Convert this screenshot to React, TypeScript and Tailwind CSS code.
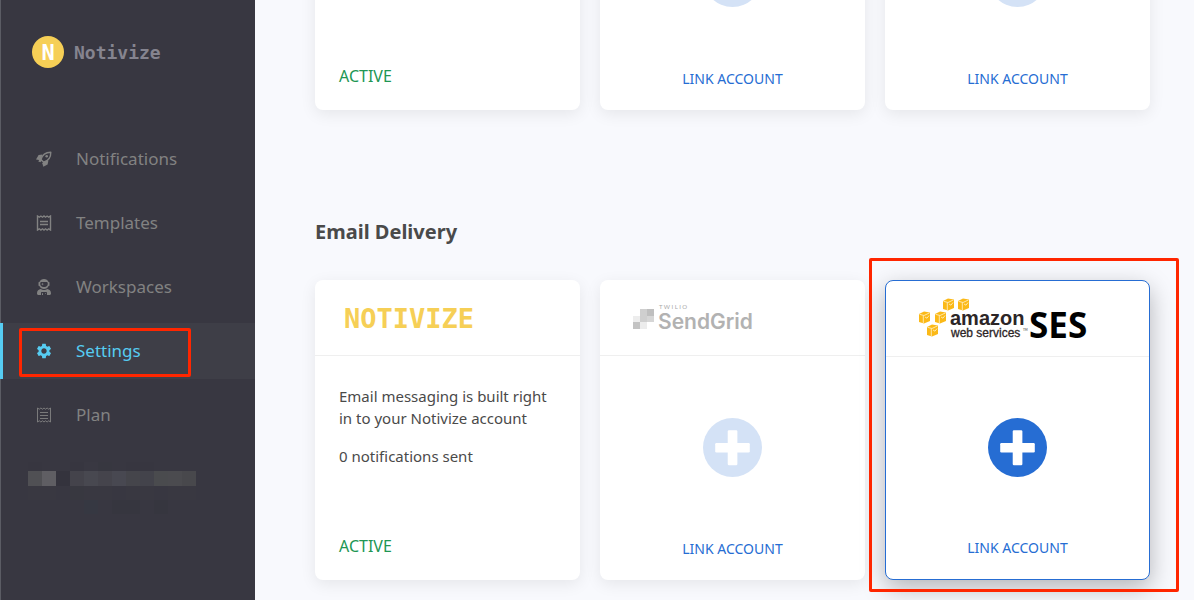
import type { ReactNode } from "react";
import { MdSettings } from "react-icons/md";
import { FaUserAstronaut } from "react-icons/fa";
import clsx from "clsx";

type NavItem = {
  label: string;
  icon: ReactNode;
  active?: boolean;
};

const navItems: NavItem[] = [
  { label: "Notifications", icon: <RocketIcon /> },
  { label: "Templates", icon: <ReceiptIcon /> },
  { label: "Workspaces", icon: <FaUserAstronaut className="size-4" /> },
  { label: "Settings", icon: <MdSettings className="size-[18px]" />, active: true },
  { label: "Plan", icon: <ReceiptIcon thin /> },
];

// obscured account name at the bottom of the sidebar
const accountRows = [
  { height: "h-[9px]", cells: ["#373640", "#383741", "#383741", "#373640", "#393842", "#373740", "#383741", "#373640", "#373640", "#383741", "#383741", "#383741"] },
  { height: "h-[15px]", cells: ["#505054", "#5f5e63", "#34333d", "#44434b", "#484850", "#45444c", "#484851", "#45454b", "#43434b", "#4a4b4e", "#4b4b4f", "#48484c"] },
  { height: "h-[14px]", cells: ["#393841", "#393841", "#383741", "#383840", "#393841", "#393841", "#383741", "#393841", "#393841", "#383741", "#393841", "#393841"] },
  { height: "h-[14px]", cells: ["#383741", "#383741", "#383741", "#383741", "#363842", "#383741", "#36363f", "#36363f", "#383741", "#36363f", "#383741", "#383741"] },
];

function RocketIcon() {
  return (
    <svg viewBox="0 0 16 16" className="size-4" aria-hidden="true">
      <path
        d="M5 8.600C6 4.600 9.200 1.200 14.800 1.200C14.900 6.400 11.800 9.900 7.600 11.200Z"
        fill="none"
        stroke="currentColor"
        strokeWidth="1.4"
        strokeLinejoin="round"
      />
      <circle cx="10.700" cy="5.200" r="1.300" fill="currentColor" />
      <path d="M6.500 3.600 2.600 4.100 0 8.400 3.100 8.900 2.300 10.600 4.300 11.200 6 9.500 5 8.300Z" fill="currentColor" />
      <path d="M12.400 9.400 11.600 13.400 7.300 15.800 6.400 12.300 7.400 10.400Z" fill="currentColor" />
    </svg>
  );
}

function ReceiptIcon({ thin }: { thin?: boolean }) {
  return (
    <svg viewBox="0 0 16 16" className="size-4" aria-hidden="true">
      <g fill="none" stroke="currentColor" strokeWidth={thin ? 0.9 : 1.4}>
        <path d="M1.500 1 3.300 2.200 4.900 1 6.500 2.200 8 1 9.500 2.200 11.100 1 12.700 2.200 14.500 1V15L12.700 13.800 11.100 15 9.500 13.800 8 15 6.500 13.800 4.900 15 3.300 13.800 1.500 15Z" />
        {thin ? <path d="M4 5.500H12M4 8.500H12M4 11.500H12" /> : <path d="M4 6.500H12M4 9.500H12" />}
      </g>
    </svg>
  );
}

function PlusCircle() {
  return (
    <svg viewBox="0 0 58 58" className="size-[59px]" aria-hidden="true">
      <circle cx="29" cy="29" r="29" fill="currentColor" />
      <rect x="12" y="24.500" width="34" height="9.500" rx="1.200" fill="#fff" />
      <rect x="24.300" y="12" width="9.500" height="34.500" rx="1.200" fill="#fff" />
    </svg>
  );
}

function SendGridLogo() {
  return (
    <svg viewBox="0 0 124 32" className="h-8 w-[124px]" role="img" aria-label="Twilio SendGrid">
      <path d="M7 7h14v13H7z" fill="#cfcfcf" />
      <path d="M14 7h7v7h-7z" fill="#bfbfbf" />
      <path d="M0 14h7v6H0z" fill="#ededed" />
      <path d="M0 20h7v7H0z" fill="#c3c3c3" />
      <path d="M7 20h7v7H7z" fill="#ececec" />
      <path d="M14 14h7v6h-7z" fill="#d6d6d6" />
      <text x="26" y="7" className="fill-[#a8a8a8] font-['Lato',sans-serif] text-[6px]">
        T W I L I O
      </text>
      <text x="25" y="27" className="fill-[#b2b2b2] font-['Inter',sans-serif] text-[21px] font-semibold">
        SendGrid
      </text>
    </svg>
  );
}

function AwsBox({ x, y }: { x: number; y: number }) {
  return (
    <g transform={`translate(${x} ${y})`}>
      <path d="M0 3 5 0.500 11 1.600 11 10 5 12.500 0 11Z" fill="#fbb917" />
      <path d="M0.500 3.300 5 4.500 10.500 1.900M4.300 4.500V12" fill="none" stroke="#fff3cf" strokeWidth="0.800" />
      <path d="M6 6 8 7.200 10 4.500" fill="none" stroke="#fff3cf" strokeWidth="0.800" />
    </g>
  );
}

function SesLogo() {
  return (
    <svg viewBox="0 0 180 46" className="h-[46px] w-[180px] shrink-0" role="img" aria-label="Amazon Web Services SES">
      <AwsBox x={24} y={2} />
      <AwsBox x={39} y={2} />
      <AwsBox x={0} y={15} />
      <AwsBox x={16} y={15} />
      <AwsBox x={8} y={28} />
      <text x="31" y="29" className="fill-[#2c2526] font-['Liberation_Sans',sans-serif] text-[20px] font-bold">
        amazon
      </text>
      <text x="32" y="41" className="fill-[#2c2526] stroke-[#2c2526] stroke-[0.3px] font-['Liberation_Sans',sans-serif] text-[12px]">
        web services
      </text>
      <text x="104" y="35" className="fill-[#2c2526] font-['Lato',sans-serif] text-[3px]">
        TM
      </text>
      <text x="110" y="42" className="fill-black font-['Open_Sans',sans-serif] text-[35px] font-bold">
        SES
      </text>
    </svg>
  );
}

function Card({ logo, selected, children }: { logo?: ReactNode; selected?: boolean; children: ReactNode }) {
  return (
    <article
      className={clsx(
        "relative flex h-[300px] flex-col rounded-lg bg-white",
        selected
          ? "border border-[#266dd3] shadow-[0_8px_24px_rgba(0,0,0,0.28)]"
          : "shadow-[0_4px_16px_rgba(0,0,0,0.08)]",
      )}
    >
      <div className="flex h-[76px] shrink-0 items-center border-b border-[#efefef] pl-[33px]">{logo}</div>
      {children}
      {selected ? (
        <div className="pointer-events-none absolute -top-[23px] -right-[30px] -bottom-[13px] -left-[17px] z-10 rounded-xs border-3 border-[#ff2600]" />
      ) : null}
    </article>
  );
}

function ActiveBody({ children }: { children?: ReactNode }) {
  return (
    <div className="flex grow flex-col justify-between px-6 pt-[29px] pb-[23px] text-[15px] leading-[22px] text-[#4a4a4a]">
      <div className="space-y-4 whitespace-nowrap">{children}</div>
      <p className="text-base leading-[22px] text-[#219653]">ACTIVE</p>
    </div>
  );
}

function LinkBody({ selected }: { selected?: boolean }) {
  return (
    <button
      type="button"
      className={clsx(
        "flex grow cursor-pointer flex-col items-center justify-between pb-5",
        selected ? "pt-[61px]" : "pt-[62px]",
      )}
    >
      <span className={selected ? "text-[#266dd3]" : "text-[#d4e2f6]"}>
        <PlusCircle />
      </span>
      <span className="text-sm leading-[22px] text-[#266dd3]">LINK ACCOUNT</span>
    </button>
  );
}

function Sidebar() {
  return (
    <aside className="flex w-[255px] shrink-0 flex-col border-l border-[#5b5c64] bg-[#383741]">
      <a href="#" className="mt-9 ml-[31px] flex items-center gap-[10px]">
        <span className="flex size-8 items-center justify-center rounded-full bg-[#f6cf56] font-['DejaVu_Sans_Mono',monospace] text-[22px] font-bold text-white">
          N
        </span>
        <span className="pt-0.5 font-['DejaVu_Sans_Mono',monospace] text-lg leading-7 font-bold text-[#85848f]">
          Notivize
        </span>
      </a>
      <nav className="mt-[63px] -ml-px flex flex-col gap-2">
        {navItems.map((item) => (
          <a
            key={item.label}
            href="#"
            className={clsx(
              "relative flex h-14 items-center border-l-3 text-[17px]",
              item.active
                ? "border-[#56ccf2] bg-[#3e3e47] text-[#56ccf2]"
                : "border-transparent text-[#828282]",
            )}
          >
            <span className="ml-8 flex w-[18px] justify-center">{item.icon}</span>
            <span className="ml-[23px]">{item.label}</span>
            {item.active ? (
              <span className="absolute top-[5px] left-4 h-[49px] w-[172px] rounded-xs border-3 border-[#ff2600]" />
            ) : null}
          </a>
        ))}
      </nav>
      <div className="mt-[19px] ml-[27px]" aria-hidden="true">
        {accountRows.map((row, i) => (
          <div key={i} className={clsx("flex", row.height)}>
            {row.cells.map((color, j) => (
              <span key={j} className="w-[14px]" style={{ backgroundColor: color }} />
            ))}
          </div>
        ))}
      </div>
    </aside>
  );
}

export default function App() {
  return (
    <div className="flex h-screen overflow-hidden bg-[#f8f9fd] font-['Noto_Sans',sans-serif]">
      <Sidebar />
      <main className="min-w-0 grow overflow-hidden pr-11 pl-[60px]">
        {/* scrolled down, so only the foot of the first row shows */}
        <section className="-mt-[190px] grid grid-cols-3 gap-5">
          <Card>
            <ActiveBody />
          </Card>
          <Card>
            <LinkBody />
          </Card>
          <Card>
            <LinkBody />
          </Card>
        </section>
        <section className="mt-[108px]">
          <h2 className="text-xl leading-7 font-bold text-[#4a4a4a]">Email Delivery</h2>
          <div className="mt-[34px] grid grid-cols-3 gap-5">
            <Card
              logo={
                <span className="-ml-1 pt-1 font-['DejaVu_Sans_Mono',monospace] text-[27px] font-bold text-[#f6cf56]">
                  NOTIVIZE
                </span>
              }
            >
              <ActiveBody>
                <p>
                  Email messaging is built right
                  <br />
                  in to your Notivize account
                </p>
                <p>0 notifications sent</p>
              </ActiveBody>
            </Card>
            <Card logo={<SendGridLogo />}>
              <LinkBody />
            </Card>
            <Card logo={<SesLogo />} selected>
              <LinkBody selected />
            </Card>
          </div>
        </section>
      </main>
    </div>
  );
}
